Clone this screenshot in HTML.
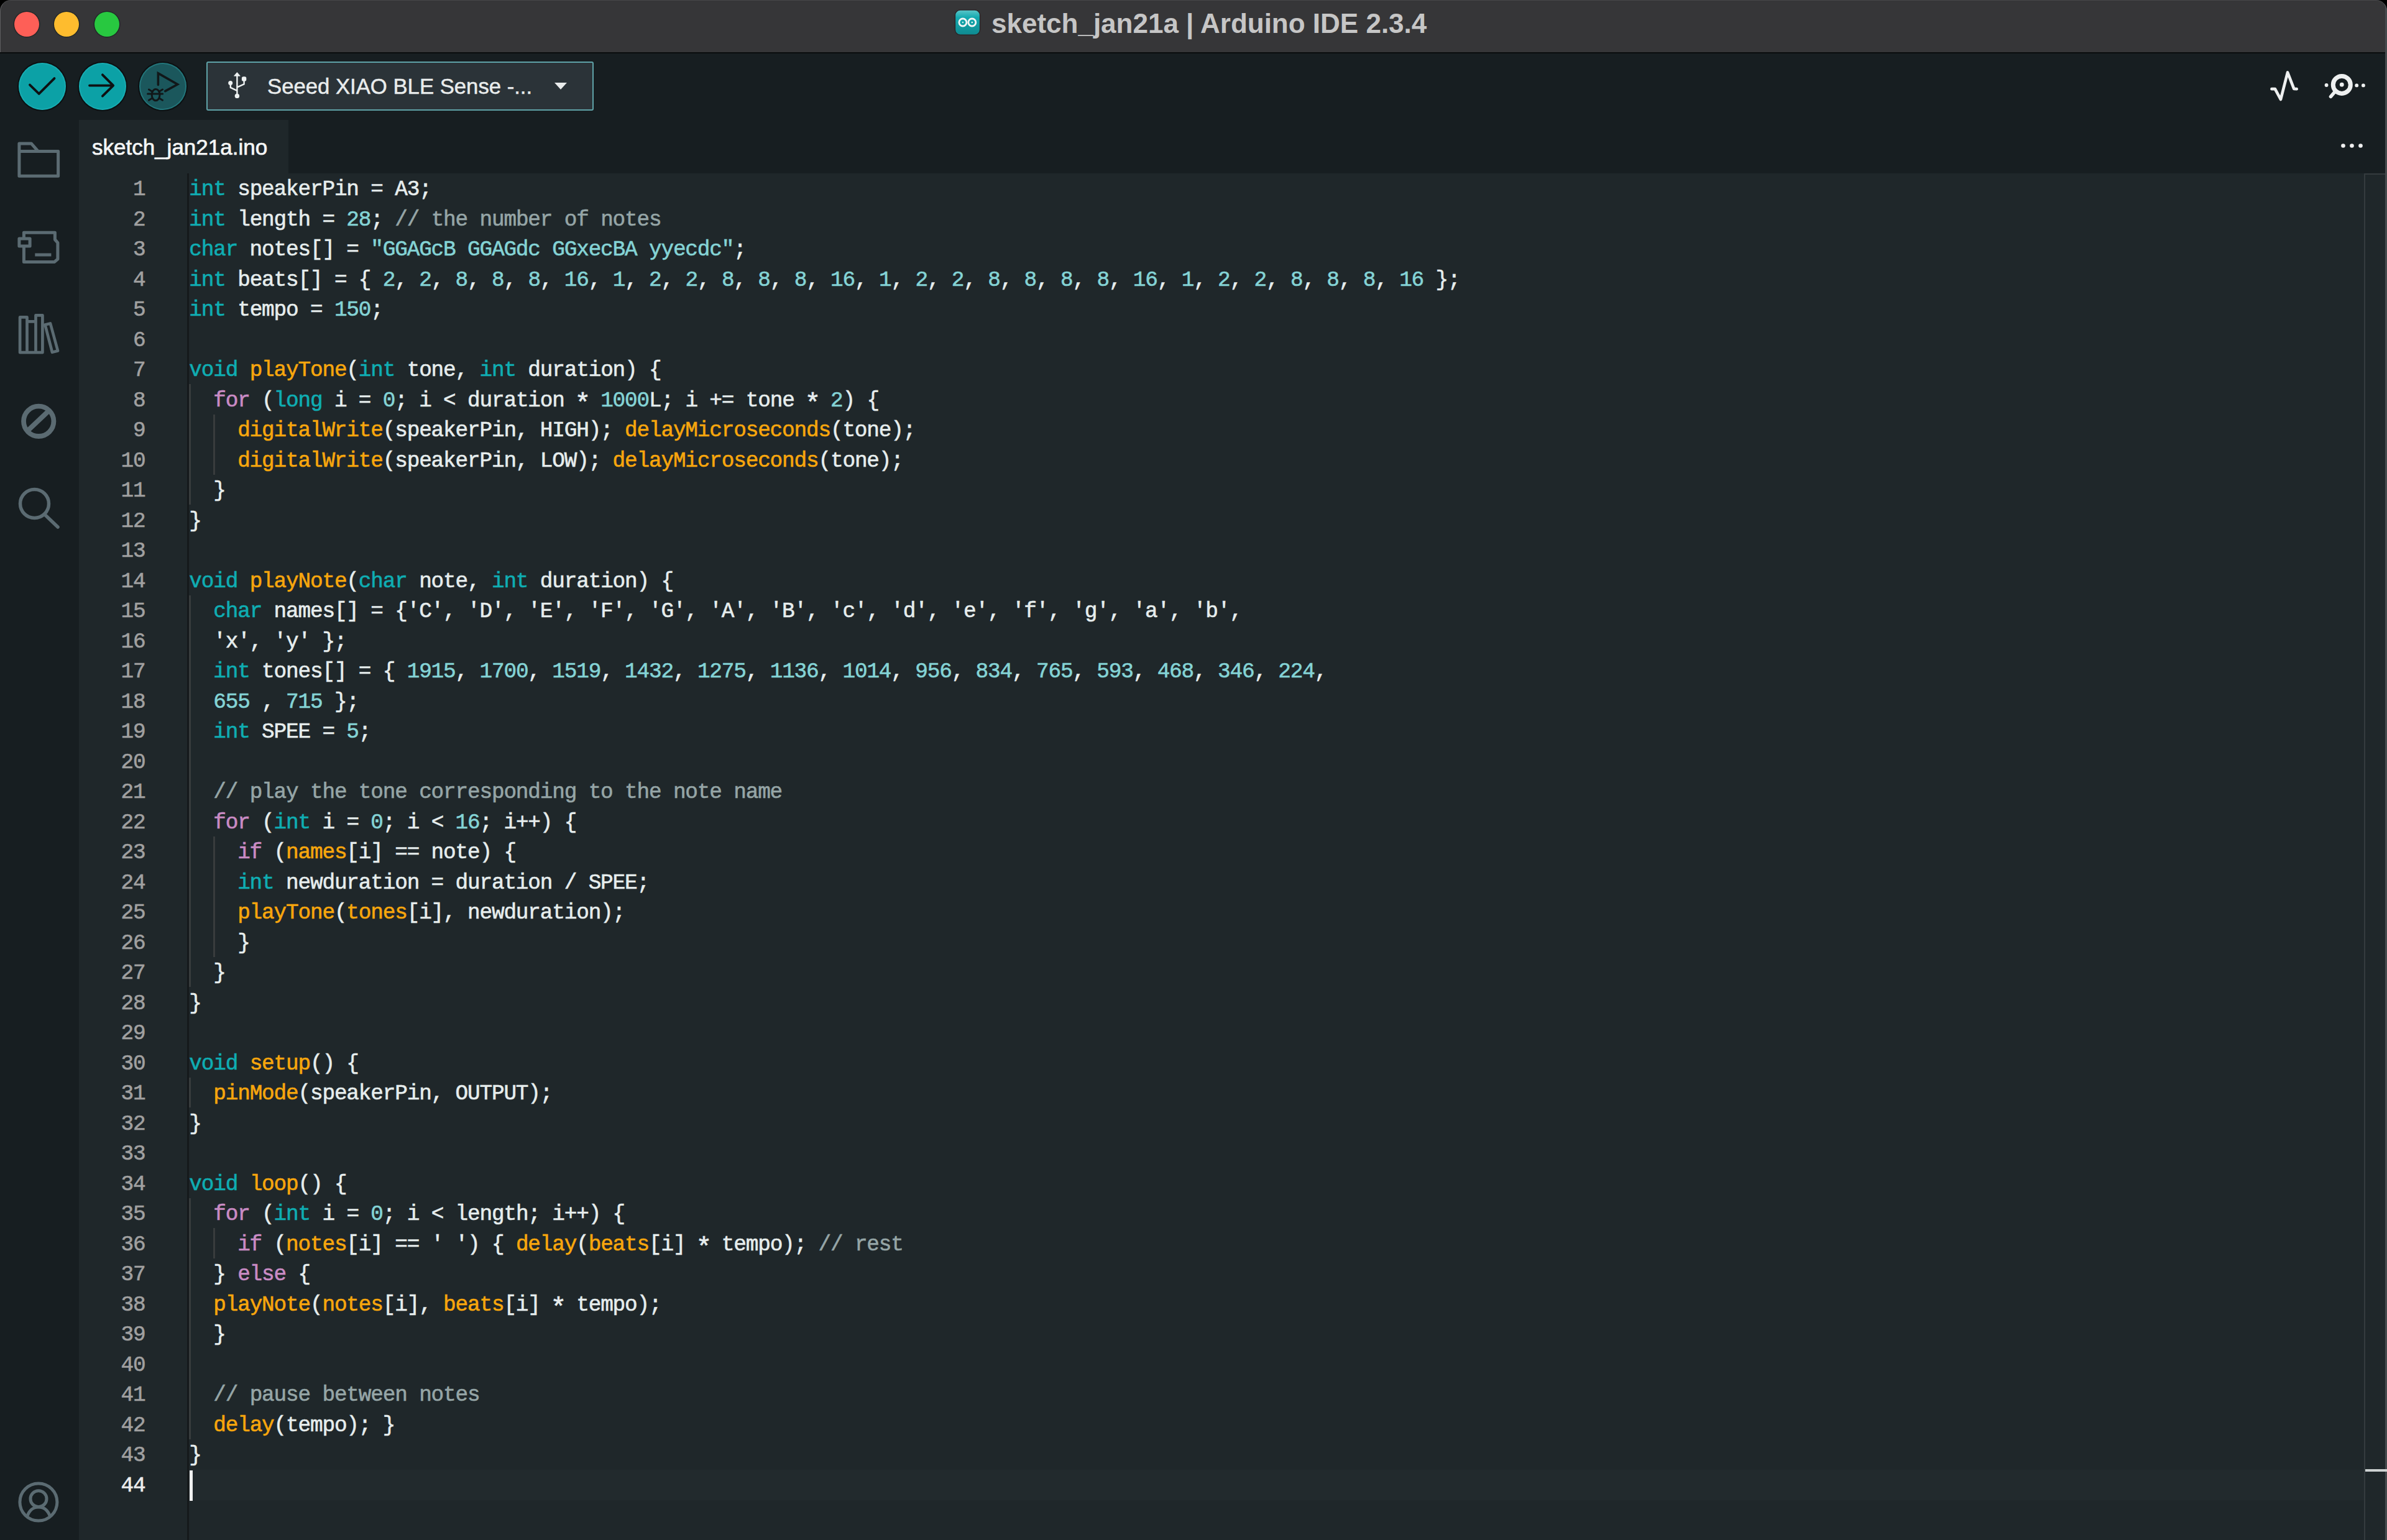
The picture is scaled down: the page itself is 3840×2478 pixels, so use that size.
<!DOCTYPE html>
<html><head><meta charset="utf-8"><style>
html,body{margin:0;padding:0;width:3840px;height:2478px;overflow:hidden;background:#000;}
#win{position:absolute;left:0;top:0;width:3840px;height:2478px;background:#171e21;border-radius:17.5px 17.5px 0 0;overflow:hidden;}
#title{position:absolute;left:0;top:0;width:3840px;height:84px;background:#363638;}
#titleline{position:absolute;left:0;top:84px;width:3840px;height:2px;background:#0a0c0d;}
.abs{position:absolute;}
.tl{position:absolute;width:40px;height:40px;border-radius:50%;top:19px;box-shadow:0 0 0 1.5px rgba(20,30,30,0.6);}
#ttext{position:absolute;left:1595px;top:7.5px;font:bold 44px/60px "Liberation Sans", sans-serif;color:#c6c6c6;white-space:pre;}
.btn{position:absolute;width:76px;height:76px;border-radius:50%;top:100.7px;box-shadow:0 0 0 2px #0c1012, inset 0 0 0 2px rgba(60,210,215,0.25);}
#board{position:absolute;left:331.5px;top:99.2px;width:619.5px;height:74.8px;border:2.5px solid #5fa3a8;border-radius:3px;background:#2b3338;}
#btext{position:absolute;left:430px;top:114px;font:34.7px/50px "Liberation Sans", sans-serif;color:#e9ecec;white-space:pre;-webkit-text-stroke:0.5px currentColor;}
#tab{position:absolute;left:127px;top:193px;width:337px;height:86px;background:#1f272a;}
#tabtext{position:absolute;left:148px;top:212px;font:35px/50px "Liberation Sans", sans-serif;color:#f4f6f6;white-space:pre;-webkit-text-stroke:0.7px currentColor;}
#editor{position:absolute;left:127px;top:278.5px;width:3710px;height:2199.5px;background:#1f272a;}
#sep{position:absolute;left:300.5px;top:278.5px;width:3.5px;height:2199.5px;background:#15191b;}
.ln{position:absolute;left:304.3px;height:48.5px;font:34.400px/48.5px "Liberation Mono", monospace;letter-spacing:-1.173px;color:#e6eded;white-space:pre;-webkit-text-stroke:0.6px currentColor;padding-top:2.9px;box-sizing:border-box;}
.num{position:absolute;left:127px;width:106.5px;text-align:right;height:48.5px;font:34.400px/48.5px "Liberation Mono", monospace;letter-spacing:-1.173px;white-space:pre;-webkit-text-stroke:0.6px currentColor;padding-top:2.9px;box-sizing:border-box;}
.ast{display:inline-block;width:19.47px;text-align:center;letter-spacing:0;transform:translateY(6px) scale(1.25);}
.guide{position:absolute;width:3px;background:#383c3d;}
#curline{position:absolute;left:304px;top:2364.50px;width:3499px;height:49.5px;background:#222a2d;}
#cursor{position:absolute;left:305px;top:2366.00px;width:5px;height:48.5px;background:#f0f0f0;}
#ruler{position:absolute;left:3803px;top:279px;width:34px;height:2199px;border-left:2px solid #343b3e;border-top:2px solid #343b3e;box-sizing:border-box;background:#1f272a;}
#rborder{position:absolute;left:3837px;top:0;width:3px;height:2478px;background:#454a4d;}
.sbi{position:absolute;}
</style></head><body>
<div id="win">
 <div id="title">
  <div class="tl" style="left:22.7px;background:#fe5f57"></div>
  <div class="tl" style="left:87px;background:#febc2e"></div>
  <div class="tl" style="left:151.8px;background:#28c840"></div>
  <svg class="abs" style="left:1534px;top:14px" width="45" height="45" viewBox="1534 14 45 45">
   <defs><linearGradient id="ag" x1="0" y1="0" x2="0" y2="1"><stop offset="0" stop-color="#5cc6c9"/><stop offset="0.3" stop-color="#14aab0"/><stop offset="1" stop-color="#0f8a90"/></linearGradient></defs>
   <rect x="1536.4" y="16.1" width="40.2" height="40.2" rx="8.5" fill="url(#ag)" stroke="#2a2628" stroke-width="1.5"/>
   <circle cx="1548.9" cy="36" r="6" fill="none" stroke="#f2f6f6" stroke-width="2.8"/>
   <circle cx="1563.8" cy="36" r="6" fill="none" stroke="#f2f6f6" stroke-width="2.8"/>
   <circle cx="1548.9" cy="36" r="1.3" fill="#cfeeee"/><circle cx="1563.8" cy="36" r="1.3" fill="#f2f6f6"/>
  </svg>
  <div id="ttext">sketch_jan21a | Arduino IDE 2.3.4</div>
 </div>
 <div class="abs" style="left:0;top:-0.5px;width:3840px;height:84.5px;box-sizing:border-box;border:1.5px solid rgba(190,190,190,0.3);border-top-color:rgba(190,190,190,0.12);border-bottom:none;border-radius:17.5px 17.5px 0 0;"></div>
 <div id="titleline"></div>

 <div class="btn" style="left:29.5px;background:#0ca1a6"></div>
 <svg class="abs" style="left:29.5px;top:100.7px" width="76" height="76" viewBox="0 0 76 76"><path d="M18 35.6 L32.7 49.9 L57.5 25.1" fill="none" stroke="#0e1012" stroke-width="3.8" stroke-linecap="round" stroke-linejoin="round"/></svg>
 <div class="btn" style="left:126.6px;background:#0ca1a6"></div>
 <svg class="abs" style="left:126.6px;top:100.7px" width="76" height="76" viewBox="0 0 76 76"><path d="M17 36.6 H54.5 M37.9 19.3 L55.2 36.7 L37.9 53.6" fill="none" stroke="#0e1012" stroke-width="3.8" stroke-linecap="round" stroke-linejoin="round"/></svg>
 <div class="btn" style="left:223.9px;background:#1b575c"></div>
 <svg class="abs" style="left:223.9px;top:100.7px" width="76" height="76" viewBox="0 0 76 76">
  <path d="M30.4 35.4 V16.9 L61.6 34.8 L41.8 45.6" fill="none" stroke="#111719" stroke-width="3.6" stroke-linecap="round" stroke-linejoin="miter"/>
  <ellipse cx="26.6" cy="51.6" rx="6.4" ry="9.2" fill="none" stroke="#111719" stroke-width="3"/>
  <path d="M13.6 50 H37.6 M15.5 43 L20.8 46.2 M37.5 43 L32.2 46.2 M15.5 60.2 L20.8 57 M37.5 60.2 L32.2 57" stroke="#111719" stroke-width="3" stroke-linecap="round" fill="none"/>
 </svg>

 <div id="board"></div>
 <svg class="abs" style="left:364px;top:114px" width="36" height="46" viewBox="0 0 36 46">
  <path d="M17.4 6 V40 M6.8 19.7 V26.9 L17.2 31.9 M28.6 14 V21.4 L17.6 26.4" fill="none" stroke="#eef2f2" stroke-width="2.4" stroke-linejoin="round"/>
  <path d="M17.4 2.6 L22.3 8.2 H12.5 Z" fill="#eef2f2" stroke="#eef2f2" stroke-width="0.8" stroke-linejoin="round"/>
  <circle cx="6.7" cy="19.4" r="3.5" fill="#eef2f2"/><rect x="24.9" y="9.3" width="7.4" height="7.4" rx="2.6" fill="#eef2f2"/><circle cx="17.4" cy="40.4" r="3.7" fill="#eef2f2"/>
 </svg>
 <div id="btext">Seeed XIAO BLE Sense -...</div>
 <svg class="abs" style="left:891px;top:132px" width="22" height="13" viewBox="0 0 22 13"><path d="M1 1 H21 L11 12 Z" fill="#e9ecec"/></svg>

 <svg class="abs" style="left:3648px;top:110px" width="54" height="58" viewBox="3648 110 54 58">
  <path d="M3654.5 143.2 H3659.9 L3669 160 L3680.1 116.5 L3690.3 142.8 L3694.7 143.2" fill="none" stroke="#eef0f0" stroke-width="4.7" stroke-linecap="round" stroke-linejoin="round"/>
 </svg>
 <svg class="abs" style="left:3735px;top:110px" width="75" height="55" viewBox="3735 110 75 55">
  <circle cx="3767.3" cy="136.4" r="14" fill="none" stroke="#eef0f0" stroke-width="7"/>
  <circle cx="3767.3" cy="136.2" r="3.4" fill="#eef0f0"/>
  <circle cx="3742.6" cy="137" r="2.9" fill="#eef0f0"/>
  <circle cx="3791.2" cy="137.4" r="2.9" fill="#eef0f0"/>
  <circle cx="3801.9" cy="137.4" r="2.9" fill="#eef0f0"/>
  <path d="M3755 149 L3749.5 155.5" stroke="#eef0f0" stroke-width="5.5" stroke-linecap="round"/>
 </svg>

 <div id="tab"></div>
 <div id="tabtext">sketch_jan21a.ino</div>
 <svg class="abs" style="left:3760px;top:228px" width="45" height="14" viewBox="3760 228 45 14">
  <circle cx="3769.5" cy="234.5" r="3.3" fill="#f0f0f0"/><circle cx="3783.5" cy="234.5" r="3.3" fill="#f0f0f0"/><circle cx="3797.5" cy="234.5" r="3.3" fill="#f0f0f0"/>
 </svg>

 <!-- sidebar icons -->
 <svg class="abs" style="left:0;top:86px" width="127" height="2392" viewBox="0 86 127 2392">
  <g fill="none" stroke="#5b6b72" stroke-width="5" stroke-linejoin="round">
   <path d="M30.9 283.2 V230.9 H50.3 L61.5 243.6 H93.6 V283.2 Z M30.9 243.6 H61.5"/>
   <path d="M38.4 384 V374.3 H88.4 V385.5 L92.9 390.7 V416.9 L87.7 421.4 H38.4 V396 M30.9 384 H48.1 V396 H30.9 Z M56.3 410 H82.4"/>
   <path d="M32.1 510.4 H43.5 V567.2 H32.1 Z M43.5 517.4 H57.5 M57.5 567.2 V507.3 H68.4 V567.2 H43.5 M72.5 522.5 L81 520.5 L93 564.5 L84 566.8 Z" stroke-width="4.7"/>
   <circle cx="62.2" cy="677.8" r="24.2" stroke-width="7.8"/>
   <path d="M45.8 691.9 L77 662.3" stroke-width="7.8"/>
   <circle cx="55.5" cy="810.5" r="23" stroke-width="5.5"/>
   <path d="M72 828 L93 848" stroke-width="5.5" stroke-linecap="round"/>
   <circle cx="61.9" cy="2417" r="30" stroke-width="5"/>
   <circle cx="62" cy="2411.7" r="13" stroke-width="5"/>
   <path d="M43.8 2440 C47 2430,54 2425,62 2425 C70 2425,77 2430,80.5 2440" stroke-width="5"/>
  </g>
 </svg>

 <div id="editor"></div>
 <div id="curline"></div>
 <div id="sep"></div>
 <div class="guide" style="left:304.30px;top:618.00px;height:194.00px"></div><div class="guide" style="left:343.24px;top:666.50px;height:97.00px"></div><div class="guide" style="left:304.30px;top:957.50px;height:630.50px"></div><div class="guide" style="left:343.24px;top:1345.50px;height:194.00px"></div><div class="guide" style="left:304.30px;top:1733.50px;height:48.50px"></div><div class="guide" style="left:304.30px;top:1927.50px;height:388.00px"></div><div class="guide" style="left:343.24px;top:1976.00px;height:48.50px"></div>
 <div class="ln" style="top:278.50px"><span style="color:#0fadb2">int</span> speakerPin = A3;</div><div class="num" style="top:278.50px;color:#a0a0a0">1</div><div class="ln" style="top:327.00px"><span style="color:#0fadb2">int</span> length = <span style="color:#84d3d5">28</span>; <span style="color:#95a5a6">// the number of notes</span></div><div class="num" style="top:327.00px;color:#a0a0a0">2</div><div class="ln" style="top:375.50px"><span style="color:#0fadb2">char</span> notes[] = <span style="color:#84d3d5">"GGAGcB GGAGdc GGxecBA yyecdc"</span>;</div><div class="num" style="top:375.50px;color:#a0a0a0">3</div><div class="ln" style="top:424.00px"><span style="color:#0fadb2">int</span> beats[] = { <span style="color:#84d3d5">2</span>, <span style="color:#84d3d5">2</span>, <span style="color:#84d3d5">8</span>, <span style="color:#84d3d5">8</span>, <span style="color:#84d3d5">8</span>, <span style="color:#84d3d5">16</span>, <span style="color:#84d3d5">1</span>, <span style="color:#84d3d5">2</span>, <span style="color:#84d3d5">2</span>, <span style="color:#84d3d5">8</span>, <span style="color:#84d3d5">8</span>, <span style="color:#84d3d5">8</span>, <span style="color:#84d3d5">16</span>, <span style="color:#84d3d5">1</span>, <span style="color:#84d3d5">2</span>, <span style="color:#84d3d5">2</span>, <span style="color:#84d3d5">8</span>, <span style="color:#84d3d5">8</span>, <span style="color:#84d3d5">8</span>, <span style="color:#84d3d5">8</span>, <span style="color:#84d3d5">16</span>, <span style="color:#84d3d5">1</span>, <span style="color:#84d3d5">2</span>, <span style="color:#84d3d5">2</span>, <span style="color:#84d3d5">8</span>, <span style="color:#84d3d5">8</span>, <span style="color:#84d3d5">8</span>, <span style="color:#84d3d5">16</span> };</div><div class="num" style="top:424.00px;color:#a0a0a0">4</div><div class="ln" style="top:472.50px"><span style="color:#0fadb2">int</span> tempo = <span style="color:#84d3d5">150</span>;</div><div class="num" style="top:472.50px;color:#a0a0a0">5</div><div class="ln" style="top:521.00px"></div><div class="num" style="top:521.00px;color:#a0a0a0">6</div><div class="ln" style="top:569.50px"><span style="color:#0fadb2">void</span> <span style="color:#f7a60d">playTone</span>(<span style="color:#0fadb2">int</span> tone, <span style="color:#0fadb2">int</span> duration) {</div><div class="num" style="top:569.50px;color:#a0a0a0">7</div><div class="ln" style="top:618.00px">  <span style="color:#c98bc4">for</span> (<span style="color:#0fadb2">long</span> i = <span style="color:#84d3d5">0</span>; i &lt; duration <span class="ast">*</span> <span style="color:#84d3d5">1000</span>L; i += tone <span class="ast">*</span> <span style="color:#84d3d5">2</span>) {</div><div class="num" style="top:618.00px;color:#a0a0a0">8</div><div class="ln" style="top:666.50px">    <span style="color:#f7a60d">digitalWrite</span>(speakerPin, HIGH); <span style="color:#f7a60d">delayMicroseconds</span>(tone);</div><div class="num" style="top:666.50px;color:#a0a0a0">9</div><div class="ln" style="top:715.00px">    <span style="color:#f7a60d">digitalWrite</span>(speakerPin, LOW); <span style="color:#f7a60d">delayMicroseconds</span>(tone);</div><div class="num" style="top:715.00px;color:#a0a0a0">10</div><div class="ln" style="top:763.50px">  }</div><div class="num" style="top:763.50px;color:#a0a0a0">11</div><div class="ln" style="top:812.00px">}</div><div class="num" style="top:812.00px;color:#a0a0a0">12</div><div class="ln" style="top:860.50px"></div><div class="num" style="top:860.50px;color:#a0a0a0">13</div><div class="ln" style="top:909.00px"><span style="color:#0fadb2">void</span> <span style="color:#f7a60d">playNote</span>(<span style="color:#0fadb2">char</span> note, <span style="color:#0fadb2">int</span> duration) {</div><div class="num" style="top:909.00px;color:#a0a0a0">14</div><div class="ln" style="top:957.50px">  <span style="color:#0fadb2">char</span> names[] = {'C', 'D', 'E', 'F', 'G', 'A', 'B', 'c', 'd', 'e', 'f', 'g', 'a', 'b',</div><div class="num" style="top:957.50px;color:#a0a0a0">15</div><div class="ln" style="top:1006.00px">  'x', 'y' };</div><div class="num" style="top:1006.00px;color:#a0a0a0">16</div><div class="ln" style="top:1054.50px">  <span style="color:#0fadb2">int</span> tones[] = { <span style="color:#84d3d5">1915</span>, <span style="color:#84d3d5">1700</span>, <span style="color:#84d3d5">1519</span>, <span style="color:#84d3d5">1432</span>, <span style="color:#84d3d5">1275</span>, <span style="color:#84d3d5">1136</span>, <span style="color:#84d3d5">1014</span>, <span style="color:#84d3d5">956</span>, <span style="color:#84d3d5">834</span>, <span style="color:#84d3d5">765</span>, <span style="color:#84d3d5">593</span>, <span style="color:#84d3d5">468</span>, <span style="color:#84d3d5">346</span>, <span style="color:#84d3d5">224</span>, </div><div class="num" style="top:1054.50px;color:#a0a0a0">17</div><div class="ln" style="top:1103.00px">  <span style="color:#84d3d5">655</span> , <span style="color:#84d3d5">715</span> };</div><div class="num" style="top:1103.00px;color:#a0a0a0">18</div><div class="ln" style="top:1151.50px">  <span style="color:#0fadb2">int</span> SPEE = <span style="color:#84d3d5">5</span>;</div><div class="num" style="top:1151.50px;color:#a0a0a0">19</div><div class="ln" style="top:1200.00px"></div><div class="num" style="top:1200.00px;color:#a0a0a0">20</div><div class="ln" style="top:1248.50px">  <span style="color:#95a5a6">// play the tone corresponding to the note name</span></div><div class="num" style="top:1248.50px;color:#a0a0a0">21</div><div class="ln" style="top:1297.00px">  <span style="color:#c98bc4">for</span> (<span style="color:#0fadb2">int</span> i = <span style="color:#84d3d5">0</span>; i &lt; <span style="color:#84d3d5">16</span>; i++) {</div><div class="num" style="top:1297.00px;color:#a0a0a0">22</div><div class="ln" style="top:1345.50px">    <span style="color:#c98bc4">if</span> (<span style="color:#f7a60d">names</span>[i] == note) {</div><div class="num" style="top:1345.50px;color:#a0a0a0">23</div><div class="ln" style="top:1394.00px">    <span style="color:#0fadb2">int</span> newduration = duration / SPEE;</div><div class="num" style="top:1394.00px;color:#a0a0a0">24</div><div class="ln" style="top:1442.50px">    <span style="color:#f7a60d">playTone</span>(<span style="color:#f7a60d">tones</span>[i], newduration);</div><div class="num" style="top:1442.50px;color:#a0a0a0">25</div><div class="ln" style="top:1491.00px">    }</div><div class="num" style="top:1491.00px;color:#a0a0a0">26</div><div class="ln" style="top:1539.50px">  }</div><div class="num" style="top:1539.50px;color:#a0a0a0">27</div><div class="ln" style="top:1588.00px">}</div><div class="num" style="top:1588.00px;color:#a0a0a0">28</div><div class="ln" style="top:1636.50px"></div><div class="num" style="top:1636.50px;color:#a0a0a0">29</div><div class="ln" style="top:1685.00px"><span style="color:#0fadb2">void</span> <span style="color:#f7a60d">setup</span>() {</div><div class="num" style="top:1685.00px;color:#a0a0a0">30</div><div class="ln" style="top:1733.50px">  <span style="color:#f7a60d">pinMode</span>(speakerPin, OUTPUT);</div><div class="num" style="top:1733.50px;color:#a0a0a0">31</div><div class="ln" style="top:1782.00px">}</div><div class="num" style="top:1782.00px;color:#a0a0a0">32</div><div class="ln" style="top:1830.50px"></div><div class="num" style="top:1830.50px;color:#a0a0a0">33</div><div class="ln" style="top:1879.00px"><span style="color:#0fadb2">void</span> <span style="color:#f7a60d">loop</span>() {</div><div class="num" style="top:1879.00px;color:#a0a0a0">34</div><div class="ln" style="top:1927.50px">  <span style="color:#c98bc4">for</span> (<span style="color:#0fadb2">int</span> i = <span style="color:#84d3d5">0</span>; i &lt; length; i++) {</div><div class="num" style="top:1927.50px;color:#a0a0a0">35</div><div class="ln" style="top:1976.00px">    <span style="color:#c98bc4">if</span> (<span style="color:#f7a60d">notes</span>[i] == ' ') { <span style="color:#f7a60d">delay</span>(<span style="color:#f7a60d">beats</span>[i] <span class="ast">*</span> tempo); <span style="color:#95a5a6">// rest</span></div><div class="num" style="top:1976.00px;color:#a0a0a0">36</div><div class="ln" style="top:2024.50px">  } <span style="color:#c98bc4">else</span> {</div><div class="num" style="top:2024.50px;color:#a0a0a0">37</div><div class="ln" style="top:2073.00px">  <span style="color:#f7a60d">playNote</span>(<span style="color:#f7a60d">notes</span>[i], <span style="color:#f7a60d">beats</span>[i] <span class="ast">*</span> tempo);</div><div class="num" style="top:2073.00px;color:#a0a0a0">38</div><div class="ln" style="top:2121.50px">  }</div><div class="num" style="top:2121.50px;color:#a0a0a0">39</div><div class="ln" style="top:2170.00px"></div><div class="num" style="top:2170.00px;color:#a0a0a0">40</div><div class="ln" style="top:2218.50px">  <span style="color:#95a5a6">// pause between notes</span></div><div class="num" style="top:2218.50px;color:#a0a0a0">41</div><div class="ln" style="top:2267.00px">  <span style="color:#f7a60d">delay</span>(tempo); }</div><div class="num" style="top:2267.00px;color:#a0a0a0">42</div><div class="ln" style="top:2315.50px">}</div><div class="num" style="top:2315.50px;color:#a0a0a0">43</div><div class="ln" style="top:2364.00px"></div><div class="num" style="top:2364.00px;color:#ececec">44</div>
 <div id="cursor"></div>
 <div id="ruler"></div>
 <div id="rborder"></div>
 <div class="abs" style="left:3805px;top:2363.5px;width:35px;height:4.5px;background:#cdd2d2"></div>
</div>
</body></html>
